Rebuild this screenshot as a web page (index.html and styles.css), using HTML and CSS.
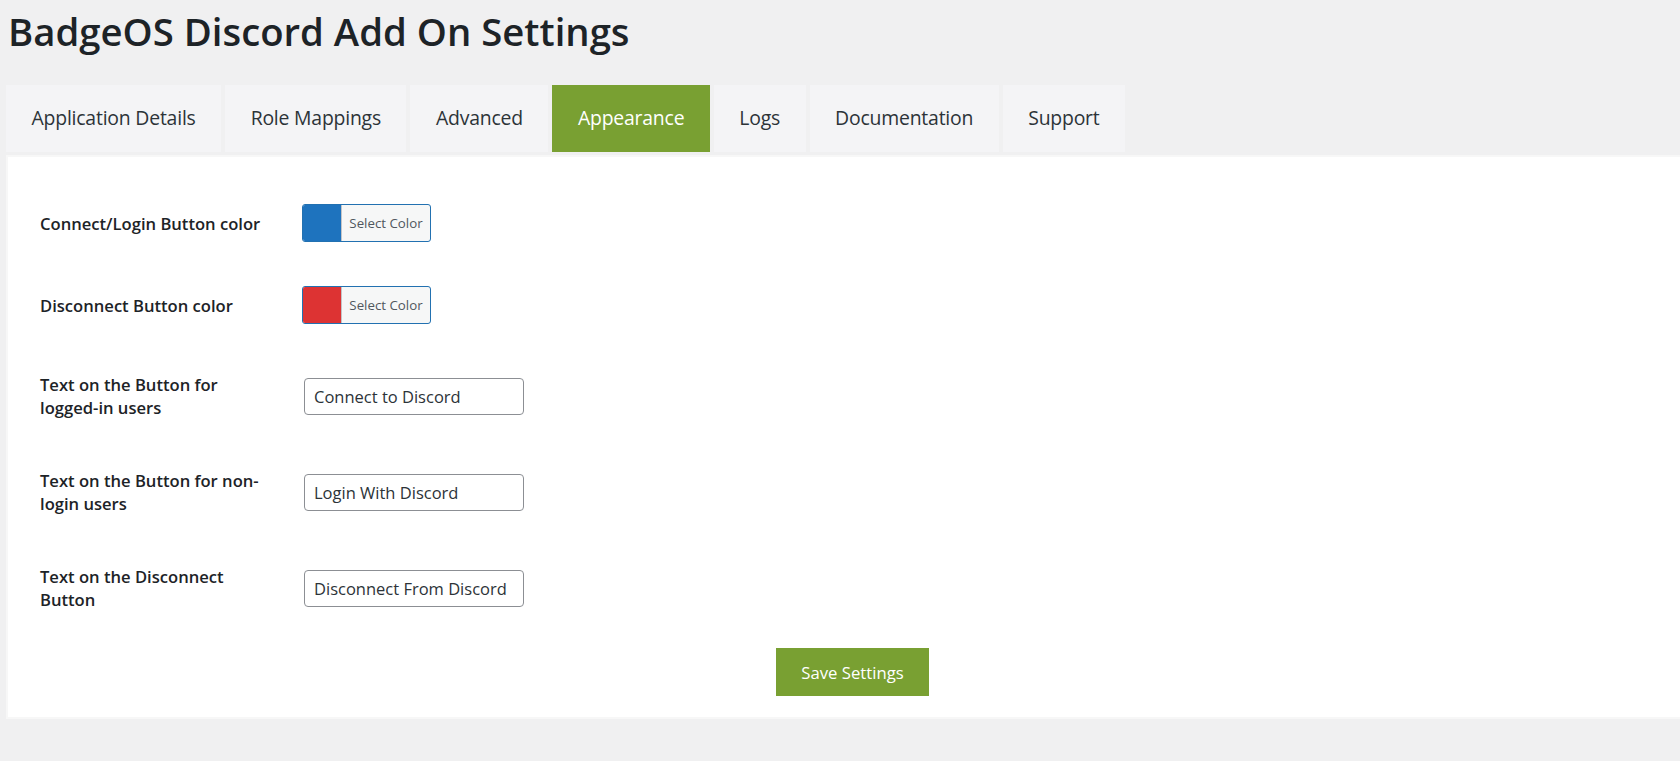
FILE: index.html
```html
<!DOCTYPE html>
<html lang="en">
<head>
<meta charset="utf-8">
<title>BadgeOS Discord Add On Settings</title>
<link rel="stylesheet" href="styles.css">
</head>
<body>
<div class="wrap">
  <h1 class="page-title">BadgeOS Discord Add On Settings</h1>
  <nav class="tabs">
    <a class="tab">Application Details</a>
    <a class="tab">Role Mappings</a>
    <a class="tab">Advanced</a>
    <a class="tab tab-active">Appearance</a>
    <a class="tab">Logs</a>
    <a class="tab">Documentation</a>
    <a class="tab">Support</a>
  </nav>
  <div class="panel">
    <form class="settings">
      <div class="row row-color">
        <label class="row-label">Connect/Login Button color</label>
        <button type="button" class="color-btn"><span class="swatch swatch-blue"></span><span class="color-text">Select Color</span></button>
      </div>
      <div class="row row-color">
        <label class="row-label">Disconnect Button color</label>
        <button type="button" class="color-btn"><span class="swatch swatch-red"></span><span class="color-text">Select Color</span></button>
      </div>
      <div class="row row-text">
        <label class="row-label">Text on the Button for logged-in users</label>
        <input class="text-input" type="text" value="Connect to Discord">
      </div>
      <div class="row row-text">
        <label class="row-label">Text on the Button for non-login users</label>
        <input class="text-input" type="text" value="Login With Discord">
      </div>
      <div class="row row-text">
        <label class="row-label">Text on the Disconnect Button</label>
        <input class="text-input" type="text" value="Disconnect From Discord">
      </div>
      <div class="submit-row">
        <button type="button" class="save-btn">Save Settings</button>
      </div>
    </form>
  </div>
</div>
</body>
</html>
```

FILE: styles.css
```css
html, body {
  margin: 0;
  padding: 0;
  background: #f0f0f1;
  overflow: hidden;
}
body {
  font-family: "Open Sans", "Noto Sans", sans-serif;
  color: #1d2327;
}
.wrap {
  padding-left: 6px;
}
.page-title {
  margin: 0;
  padding: 6px 0 0 2px;
  height: 85px;
  box-sizing: border-box;
  font-size: 38.3px;
  font-weight: 600;
  line-height: 50px;
  color: #1d2327;
}
.tabs {
  display: flex;
  gap: 4px;
  height: 67px;
}
.tab {
  display: flex;
  align-items: center;
  padding: 0 25.5px 2px;
  background: #f4f4f6;
  color: #2c3338;
  font-size: 19.4px;
  letter-spacing: -0.2px;
  text-decoration: none;
}
.tab-active {
  background: #79a032;
  color: #fff;
}
.panel {
  margin-top: 3px;
  background: #fff;
  border: 2px solid #f7f7f7;
  border-right: 0;
  height: 560px;
}
.settings {
  padding: 25px 0 0 32px;
}
.row {
  display: flex;
  align-items: center;
}
.row-color {
  padding: 22px 0;
}
.row-text {
  padding: 26px 0 22px;
}
.row-label {
  width: 230px;
  margin-right: 32px;
  font-size: 16.6px;
  font-weight: 600;
  line-height: 23px;
  color: #1d2327;
}
.row-text .row-label {
  min-height: 48px;
  display: flex;
  align-items: center;
}
.color-btn {
  display: flex;
  align-items: stretch;
  padding: 0;
  margin: 0;
  width: 129px;
  height: 38px;
  border: 1px solid #2271b1;
  border-radius: 3px;
  background: #f6f7f7;
  overflow: hidden;
  cursor: pointer;
}
.swatch {
  width: 38px;
  border-right: 1px solid #c3c4c7;
}
.swatch-blue { background: #1e73be; }
.swatch-red { background: #dd3333; }
.color-text {
  flex: 1;
  display: flex;
  align-items: center;
  justify-content: center;
  font-family: "Open Sans", sans-serif;
  font-size: 13.3px;
  color: #50575e;
}
.text-input {
  margin: 0 0 0 2px;
  width: 220px;
  height: 37px;
  box-sizing: border-box;
  padding: 0 9px;
  border: 1px solid #8c8f94;
  border-radius: 4px;
  background: #fff;
  font-family: "Open Sans", sans-serif;
  font-size: 16.5px;
  color: #2c3338;
}
.submit-row {
  display: flex;
  justify-content: center;
  margin-top: 14px;
  padding-right: 15px;
}
.save-btn {
  width: 153px;
  height: 48px;
  border: 0;
  border-radius: 0;
  background: #79a032;
  color: #fff;
  font-family: "Open Sans", sans-serif;
  font-size: 16.7px;
  cursor: pointer;
}
```
